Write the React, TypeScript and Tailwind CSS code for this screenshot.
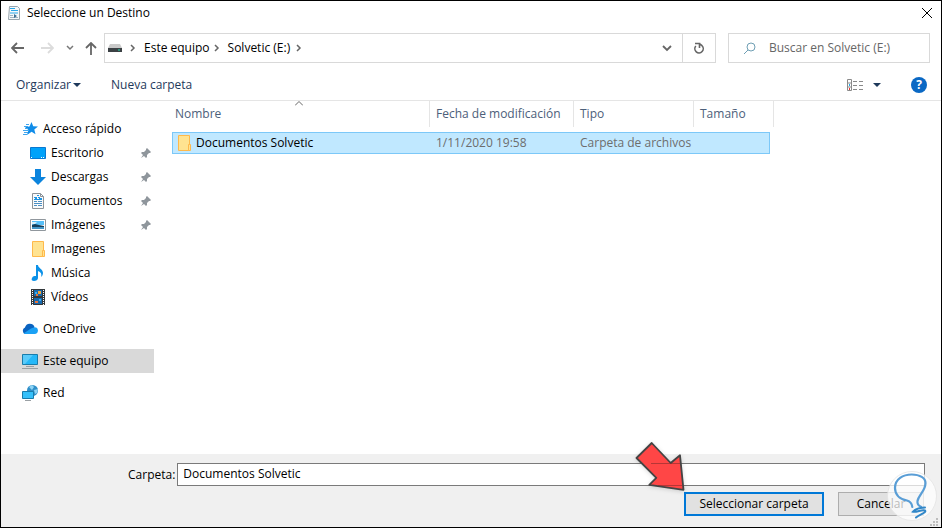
import type { ReactNode } from "react";

type IconName =
  | "star"
  | "desktop"
  | "download"
  | "document"
  | "picture"
  | "folder"
  | "music"
  | "video"
  | "cloud"
  | "computer"
  | "network";

type Place = { label: string; icon: IconName; pinned?: boolean };

const quickAccess: Place[] = [
  { label: "Escritorio", icon: "desktop", pinned: true },
  { label: "Descargas", icon: "download", pinned: true },
  { label: "Documentos", icon: "document", pinned: true },
  { label: "Imágenes", icon: "picture", pinned: true },
  { label: "Imagenes", icon: "folder" },
  { label: "Música", icon: "music" },
  { label: "Vídeos", icon: "video" },
];

const icons: Record<IconName, ReactNode> = {
  star: (
    <>
      <path d="M9.5 1l1.7 4.300 4.800.2-3.700 3 1.200 4.700-3.900-2.400L5 14l1.400-5L3 6l4.500-.6z" fill="#0f8ce9" />
      <path d="M4 3.500h3M2 5.500h4M3 7.500h3M1 9.500h5M2 11.500h4M1 13.500h4" stroke="#3fa5ee" />
    </>
  ),
  desktop: (
    <>
      <path d="M.5 2.500h15v11H.5z" fill="#00a2fa" stroke="#0a78d0" />
      <path d="M1 12.500h1M11 12.500h1M13 12.500h1" stroke="#fff" />
    </>
  ),
  download: <path d="M5 0h6v8h5l-8 8-8-8h5z" fill="#0b84dd" />,
  document: (
    <>
      <path d="M2.500.5h8l3 3v12h-11z" fill="#fafafa" stroke="#8b9298" />
      <path d="M10.500.5v3h3" fill="none" stroke="#8b9298" />
      <path d="M4 4.500h3M8 4.500h2M4 6.500h8M7 2.500h2M5 5.500h2M9 5.500h3" stroke="#1d95e5" />
      <path d="M4 8.500h3M8 8.500h4M4 10.500h8M4 12.500h3M8 12.500h4" stroke="#4a8fc4" />
    </>
  ),
  picture: (
    <>
      <path d="M.5 2.500h15v11H.5z" fill="#fff" stroke="#90979d" />
      <path d="M2 4h12v4H2z" fill="#57bff8" />
      <path d="M2 5h5l-2 2H2z" fill="#d7effb" />
      <path d="M2 8l3-1 4 1 5 1v1H2z" fill="#153f5c" />
      <path d="M2 10h12v2H2z" fill="#4195c7" />
    </>
  ),
  folder: (
    <>
      <path d="M2.500.5h11v15h-11z" fill="#ffe391" stroke="#ffb94b" />
      <path d="M12.500 9.500h2v6h-2z" fill="#ffe391" stroke="#ffb94b" />
    </>
  ),
  music: (
    <path
      d="M6 0h2c0 3 5 4 5 8 0 2-1 3-2 4 1-3 0-5-3-6v7c0 2-2 3-4 3s-3-1-2-3 2-2 4-2z"
      fill="#0b91e8"
    />
  ),
  video: (
    <>
      <path d="M1 0h14v16H1z" fill="#33383c" />
      <path d="M4 1h8v6H4zM4 9h8v6H4z" fill="#1769ad" />
      <path d="M8 2h3v3H8z" fill="#f0a53c" />
      <path d="M5 3h2v2H5zM9 10h2v2H9z" fill="#36aef3" />
      <path d="M6 5h2v2H6zM5 12h3v2H5z" fill="#e8743b" />
      <path d="M2.500 1v15M13.500 1v15" stroke="#fff" strokeDasharray="1 1" />
    </>
  ),
  cloud: (
    <>
      <path d="M3 13a3.500 3.500 0 010-6.500 5 5 0 019.500-.5l-3 7z" fill="#0a63c0" />
      <path d="M1.500 12.500L9 7.500l3.500-1.300A3.400 3.400 0 0112.500 13H3z" fill="#1ba1f5" />
    </>
  ),
  computer: (
    <>
      <path d="M.5 1.500h15v10H.5z" fill="#25b8f8" stroke="#197cab" />
      <path d="M1 2h10L3 11H1z" fill="#5acbfa" />
      <path d="M4 13.500h8M0 15.500h16" stroke="#9aa0a4" />
    </>
  ),
  network: (
    <>
      <circle cx="10.500" cy="5.500" r="5.500" fill="#2f8fc9" />
      <path d="M7 2l3-2 2 2-2 3zM12 5l4-1-1 4-2 1z" fill="#8ed3f4" />
      <path d="M.5 6.500h11v7H.5z" fill="#35c0fa" stroke="#197cab" />
      <path d="M3 15.500h6" stroke="#9aa0a4" />
    </>
  ),
};

function Icon({ name }: { name: IconName }) {
  return (
    <svg viewBox="0 0 16 16" className="size-4 shrink-0" aria-hidden="true">
      {icons[name]}
    </svg>
  );
}

function Pin() {
  return (
    <svg viewBox="0 0 12 12" className="ml-auto size-3" aria-hidden="true">
      <path d="M7 1l4 4-1 1H9L7 8v2l-1 1-2-2-3 2 2-3-2-2 1-1h2l2-2V2z" fill="#8f969c" />
    </svg>
  );
}

function PlaceLink({ place, nested, active }: { place: Place; nested?: boolean; active?: boolean }) {
  return (
    <a
      href="#"
      className={`flex h-6 items-center gap-[5px] pr-0.5 ${nested ? "pl-[29px]" : "pl-[21px]"} ${
        active ? "bg-[#d9d9d9]" : ""
      }`}
    >
      <Icon name={place.icon} />
      {place.label}
      {place.pinned && <Pin />}
    </a>
  );
}

function Crumb() {
  return (
    <svg viewBox="0 0 6 8" className="h-2 w-1.5" fill="none" stroke="#666" strokeWidth="1.5" aria-hidden="true">
      <path d="M1 1l3 3-3 3" />
    </svg>
  );
}

function Caret() {
  return (
    <svg viewBox="0 0 8 4" className="h-1 w-2" fill="#1e395b" aria-hidden="true">
      <path d="M0 0h8L4 4z" />
    </svg>
  );
}

export default function App() {
  return (
    <div className="flex min-h-screen flex-col border border-black bg-white font-['Open_Sans',sans-serif] text-xs text-black">
      <header className="flex h-6 items-center pl-[5px] pr-2">
        <svg viewBox="0 0 16 16" className="size-4" aria-hidden="true">
          <path d="M3.500 1.500h8l2 2v11h-11z" fill="#f4f8fa" stroke="#98a5ae" />
          <path d="M4 3.500h5M5 5.500h7" stroke="#2aa7ea" />
          <path d="M4 7h8v2H4z" fill="#8fd0f2" />
          <path d="M4 10.500h3M4 12.500h8" stroke="#9fb4c2" />
          <path d="M8 9l3 2-3 2z" fill="#3a6e94" />
        </svg>
        <h1 className="ml-[5px]">Seleccione un Destino</h1>
        <button aria-label="Cerrar" className="ml-auto">
          <svg viewBox="0 0 12 12" className="size-3" stroke="#000">
            <path d="M1 1l10 10M11 1L1 11" />
          </svg>
        </button>
      </header>

      <div className="mt-2 flex h-[30px] items-stretch pr-[11px]">
        <nav className="flex w-[103px] shrink-0 items-center pl-2.5">
          <button aria-label="Atrás">
            <svg viewBox="0 0 13 12" className="h-3 w-[13px]" fill="none" stroke="#666" strokeWidth="1.8">
              <path d="M13 6H1M6 1L1 6l5 5" />
            </svg>
          </button>
          <button aria-label="Adelante" className="ml-[17px]">
            <svg viewBox="0 0 13 12" className="h-3 w-[13px]" fill="none" stroke="#dcdcdc" strokeWidth="1.8">
              <path d="M0 6h12M7 1l5 5-5 5" />
            </svg>
          </button>
          <button aria-label="Ubicaciones recientes" className="ml-3">
            <svg viewBox="0 0 8 6" className="h-1.5 w-2" fill="none" stroke="#777" strokeWidth="1.5">
              <path d="M1 1l3 3 3-3" />
            </svg>
          </button>
          <button aria-label="Arriba" className="ml-[11px]">
            <svg viewBox="0 0 12 13" className="h-[13px] w-3" fill="none" stroke="#666" strokeWidth="1.8">
              <path d="M6 13V1M1 6l5-5 5 5" />
            </svg>
          </button>
        </nav>
        <div className="flex flex-1 border border-[#d9d9d9]">
          <div className="flex flex-1 items-center pl-[3px]">
            <svg viewBox="0 0 14 10" className="mr-2 h-2.5 w-3.5" aria-hidden="true">
              <path d="M2 1h10l2 4H0z" fill="#c9c9c9" />
              <path d="M0 5h14v4H0z" fill="#3b4044" />
              <path d="M10 7h2" stroke="#25e0b0" />
            </svg>
            <Crumb />
            <a href="#" className="ml-2 mr-1">Este equipo</a>
            <Crumb />
            <a href="#" className="ml-2 mr-1.5">Solvetic (E:)</a>
            <Crumb />
            <button aria-label="Ubicaciones anteriores" className="ml-auto mr-2.5">
              <svg viewBox="0 0 10 7" className="h-[7px] w-2.5" fill="none" stroke="#666" strokeWidth="1.8">
                <path d="M1 1l4 4 4-4" />
              </svg>
            </button>
          </div>
          <button aria-label="Actualizar" className="flex w-[33px] items-center justify-center border-l border-[#d9d9d9]">
            <svg viewBox="0 0 12 12" className="size-3" fill="none" stroke="#666" strokeWidth="1.6">
              <path d="M2.800 4A4.200 4.200 0 1 0 9 3.700L6.200 1.500M2 1.500h4.500V6" />
            </svg>
          </button>
        </div>
        <label className="ml-3 flex w-[202px] items-center border border-[#d9d9d9] pl-3.5">
          <svg viewBox="0 0 13 13" className="size-[13px] shrink-0" fill="none" stroke="#6f9fb4" aria-hidden="true">
            <circle cx="8" cy="5" r="4" />
            <path d="M5 8l-4 4" />
          </svg>
          <input
            type="search"
            aria-label="Buscar"
            placeholder="Buscar en Solvetic (E:)"
            className="ml-[13px] w-full min-w-0 outline-none placeholder:text-[#666]"
          />
        </label>
      </div>

      <div className="flex items-center pb-[7px] pl-[15px] pr-3.5 pt-3.5 text-[#1e395b]">
        <button className="flex items-center gap-0.5">
          Organizar
          <Caret />
        </button>
        <button className="ml-[30px]">Nueva carpeta</button>
        <button aria-label="Vista" className="ml-auto flex items-center gap-[9px]">
          <svg viewBox="0 0 17 12" className="h-3 w-[17px]" fill="none" stroke="#8a8a8a">
            <path d="M.5.5h4v11h-4zM.5 4h4M.5 8h4M6 2.500h4M12 2.500h4M6 6.500h4M12 6.500h4M6 10.500h4M12 10.500h4" />
            <path d="M2 6h1" stroke="#1da5e8" strokeWidth="2" />
            <path d="M2 10h1" stroke="#e33" strokeWidth="2" />
          </svg>
          <Caret />
        </button>
        <button aria-label="Ayuda" className="ml-[30px] size-4 rounded-full bg-[#0a68c4] font-bold leading-4 text-white">
          ?
        </button>
      </div>

      <main className="flex flex-1 border-t border-[#e5e5e5]">
        <aside className="flex w-[153px] shrink-0 flex-col gap-2 pt-4">
          <div>
            <PlaceLink place={{ label: "Acceso rápido", icon: "star" }} />
            {quickAccess.map((place) => (
              <PlaceLink key={place.label} place={place} nested />
            ))}
          </div>
          <PlaceLink place={{ label: "OneDrive", icon: "cloud" }} />
          <PlaceLink place={{ label: "Este equipo", icon: "computer" }} active />
          <PlaceLink place={{ label: "Red", icon: "network" }} />
        </aside>

        <section className="ml-[18px] flex-1">
          <table className="w-[602px] table-fixed border-separate border-spacing-0 text-left">
            <thead className="text-[#4c607a]">
              <tr className="h-[26px]">
                <th className="relative w-[258px] border-r border-[#e5e5e5] p-0 pl-[3px] font-normal">
                  Nombre
                  <svg viewBox="0 0 8 5" className="absolute left-[123px] top-0 h-[5px] w-2" fill="none" stroke="#666">
                    <path d="M0 4.500l4-4 4 4" />
                  </svg>
                </th>
                <th className="w-36 border-r border-[#e5e5e5] p-0 pl-1.5 font-normal">Fecha de modificación</th>
                <th className="w-[120px] border-r border-[#e5e5e5] p-0 pl-1.5 font-normal">Tipo</th>
                <th className="w-20 border-r border-[#e5e5e5] p-0 pl-1.5 font-normal">Tamaño</th>
              </tr>
            </thead>
            <tbody className="text-[#6d6d6d]">
              <tr>
                <td className="p-0 pt-[5px]">
                  <div className="flex h-[22px] items-center gap-1 border-y border-l border-[#7cc8f8] bg-[#c0e8ff] pl-[3px] text-black">
                    <Icon name="folder" />
                    Documentos Solvetic
                  </div>
                </td>
                <td className="p-0 pt-[5px]">
                  <div className="flex h-[22px] items-center border-y border-[#7cc8f8] bg-[#c0e8ff] pl-1.5">1/11/2020 19:58</div>
                </td>
                <td className="p-0 pt-[5px]">
                  <div className="flex h-[22px] items-center border-y border-[#7cc8f8] bg-[#c0e8ff] pl-1.5">Carpeta de archivos</div>
                </td>
                <td className="p-0 pt-[5px]">
                  <div className="mr-1 h-[22px] border-y border-r border-[#7cc8f8] bg-[#c0e8ff]" />
                </td>
              </tr>
            </tbody>
          </table>
        </section>
      </main>

      <footer className="relative bg-[#f0f0f0] pb-[11px] pl-[127px] pr-4 pt-[9px]">
        <div className="flex items-center gap-0.5">
          <label htmlFor="folder">Carpeta:</label>
          <input
            id="folder"
            defaultValue="Documentos Solvetic"
            className="h-[23px] flex-1 border border-[#7a7a7a] bg-white px-[5px] pb-0.5 outline-none"
          />
        </div>
        <div className="mt-1.5 flex justify-end gap-3.5 pr-px">
          <div className="relative">
            <button className="h-6 w-[140px] border-2 border-[#0078d7] bg-[#e1e1e1]">Seleccionar carpeta</button>
            <svg viewBox="0 0 52 54" className="absolute -left-[50px] -top-[52px] h-[54px] w-[52px] drop-shadow-sm" aria-hidden="true">
              <path
                d="M17.700 3l19 20 9.300-7.700 3.500 34.500-34.200-5 7-7L2.500 18z"
                fill="#ff4646"
                stroke="#444"
                strokeWidth="1.800"
                strokeLinejoin="round"
              />
              <path d="M17 23.500h29M24 45.500h24" stroke="#7a2a2a" strokeOpacity=".55" />
            </svg>
          </div>
          <button className="h-6 w-[86px] border border-[#adadad] bg-[#e1e1e1]">Cancelar</button>
        </div>

        <svg viewBox="0 0 9 9" className="absolute bottom-0 right-0.5 size-[9px]" fill="#bdbdbd" aria-hidden="true">
          <path d="M6 0h2v2H6zM3 3h2v2H3zM6 3h2v2H6zM0 6h2v2H0zM3 6h2v2H3zM6 6h2v2H6z" />
        </svg>
        <svg viewBox="0 0 50 50" className="pointer-events-none absolute bottom-1.5 right-1 size-[50px]" aria-hidden="true">
          <circle cx="25" cy="25" r="24.500" fill="#fff" fillOpacity=".72" stroke="#e4e4e4" strokeOpacity=".8" />
          <path
            d="M25.300 36C25 33 23.500 30.500 20 29.500 12 28 8 23 8 17 8 8 16 3.500 24.700 3.500 33 3.500 38.500 7 38.500 12c0 8-7 12-8 18-.4 3 1.500 5 3.500 5.700"
            fill="none"
            stroke="#5a9ed6"
            strokeWidth="2.200"
            strokeLinecap="round"
          />
          <path
            d="M38 36.500c-5 0-10 2-12 4.200 4 .8 9-2.700 12-1.200 2 2-5 3.500-9 7"
            fill="none"
            stroke="#3187c8"
            strokeWidth="2"
            strokeLinecap="round"
          />
        </svg>
      </footer>
    </div>
  );
}
